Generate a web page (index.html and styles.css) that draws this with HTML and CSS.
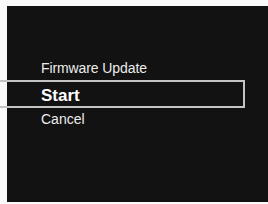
FILE: index.html
```html
<!DOCTYPE html>
<html lang="en">
<head>
    <meta charset="UTF-8">
    <title>Firmware Update</title>
    <link rel="stylesheet" href="styles.css">
</head>
<body>
    <div class="screen">
        <div class="menu-title">Firmware Update</div>
        <div class="menu-item selected">Start</div>
        <div class="menu-item">Cancel</div>
    </div>
</body>
</html>
```
FILE: styles.css
```css
body {
    margin: 0;
    padding: 0;
    background-color: #fafafa;
    font-family: 'Liberation Sans', Arial, sans-serif;
}

.screen {
    margin: 6px 0 0 7px;
    width: 261px;
    height: 196px;
    padding-top: 54px;
    box-sizing: border-box;
    background-color: #121212;
    color: #ececec;
}

.menu-title {
    padding-left: 34px;
    font-size: 14px;
    line-height: 16px;
    letter-spacing: -0.1px;
}

.menu-item {
    padding-left: 34px;
    font-size: 14px;
    line-height: 16px;
    margin-top: 3px;
}

.menu-item.selected {
    margin: 4px 0 0 -7px;
    width: 245px;
    box-sizing: border-box;
    padding: 4px 0 0 41px;
    border: 2px solid #c4c4c4;
    border-left: none;
    font-size: 17px;
    font-weight: bold;
    line-height: 20px;
    color: #ffffff;
}
```
